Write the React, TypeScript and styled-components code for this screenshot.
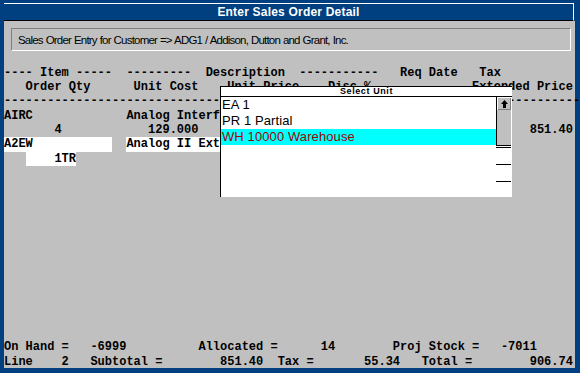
import styled, { createGlobalStyle } from "styled-components";

const GlobalStyle = createGlobalStyle`
	html, body {
		margin: 0;
		padding: 0;
		background: #004080;
	}
`;

const Frame = styled.div`
	width: 580px;
	height: 373px;
	box-sizing: border-box;
	padding: 3px 5px 5px 4px;
	background: #004080;
	display: flex;
	flex-direction: column;
	overflow: hidden;
`;

const TitleBar = styled.div`
	height: 18px;
	box-sizing: border-box;
	margin-right: 1px;
	border-top: 1px solid #ffffff;
	border-right: 1px solid #ffffff;
	border-bottom: 1px solid #000000;
	display: flex;
	align-items: center;
	justify-content: center;
	color: #ffffff;
	font: bold 12px "Liberation Sans", Arial, sans-serif;
	letter-spacing: 0.2px;
`;

const Body = styled.div`
	position: relative;
	flex: 1;
	background: #c0c0c0;
	display: flex;
	flex-direction: column;
`;

const Banner = styled.div`
	margin: 7px 4px 0 7px;
	height: 23px;
	box-sizing: border-box;
	border-top: 1px solid #808080;
	border-left: 1px solid #808080;
	border-right: 1px solid #ffffff;
	border-bottom: 1px solid #ffffff;
	padding-left: 6px;
	display: flex;
	align-items: center;
	font: 11.5px "Liberation Sans", Arial, sans-serif;
	letter-spacing: -0.8px;
	word-spacing: 0.5px;
	color: #000000;
	white-space: nowrap;
`;

const Grid = styled.div`
	margin-top: 14.5px;
	font: bold 12px "Liberation Mono", "Courier New", monospace;
	color: #000000;
`;

const Row = styled.div<{ $height?: number }>`
	height: ${(p) => p.$height ?? 14.4}px;
	line-height: ${(p) => p.$height ?? 14.4}px;
	white-space: pre;
`;

const Field = styled.span<{ $cols: number; $right?: boolean }>`
	display: inline-block;
	vertical-align: top;
	width: ${(p) => p.$cols}ch;
	background: #ffffff;
	text-align: ${(p) => (p.$right ? "right" : "left")};
	overflow: hidden;
`;

const Footer = styled(Grid)`
	margin-top: auto;
	margin-bottom: -2px;
`;

const Popup = styled.div`
	position: absolute;
	left: 216px;
	top: 65px;
	width: 292px;
	height: 111px;
	box-sizing: border-box;
	background: #ffffff;
	border-top: 1px solid #000000;
	border-left: 1px solid #000000;
	display: flex;
	flex-direction: column;
`;

const PopupTitle = styled.div`
	height: 10px;
	box-sizing: border-box;
	border-bottom: 1px solid #000000;
	text-align: center;
	font: bold 9px "Liberation Sans", Arial, sans-serif;
	line-height: 9px;
	letter-spacing: 0.6px;
	color: #000000;
`;

const PopupBody = styled.div`
	flex: 1;
	display: flex;
	padding-right: 1px;
`;

const List = styled.div`
	flex: 1;
`;

const Item = styled.div<{ $selected?: boolean }>`
	height: 16px;
	line-height: 16px;
	padding-left: 1px;
	font: 13px "Liberation Sans", Arial, sans-serif;
	letter-spacing: 0.1px;
	background: ${(p) => (p.$selected ? "#00ffff" : "transparent")};
	color: ${(p) => (p.$selected ? "#a00000" : "#000000")};
	white-space: pre;
`;

const ScrollCol = styled.div`
	width: 15px;
	display: flex;
	flex-direction: column;
`;

const ScrollButton = styled.div`
	height: 13px;
	box-sizing: border-box;
	border-left: 1px solid #000000;
	background: #c0c0c0;
	box-shadow: inset 1px 1px #ffffff, inset -1px -1px #808080;
	display: flex;
	align-items: center;
	justify-content: center;
`;

const ScrollTrack = styled.div`
	height: 36px;
	box-sizing: border-box;
	border-left: 1px solid #000000;
	border-bottom: 1px solid #000000;
	background: #c0c0c0;
`;

const Tick = styled.div<{ $gap: number }>`
	margin-top: ${(p) => p.$gap}px;
	height: 1px;
	background: #000000;
`;

const cols = (parts: [number, string][]) => {
	let s = "";
	for (const [c, t] of parts) s = s.padEnd(c, " ") + t;
	return s;
};

const UpArrow = () => (
	<svg width="7" height="8" viewBox="0 0 7 8">
		<path d="M3.5 0 L7 4 L5 4 L5 8 L2 8 L2 4 L0 4 Z" fill="#000" />
	</svg>
);

const units = ["EA 1", "PR 1 Partial", "WH 10000 Warehouse"];

const App = () => {
	return (
		<>
			<GlobalStyle />
			<Frame>
				<TitleBar>Enter Sales Order Detail</TitleBar>
				<Body>
					<Banner>
						Sales Order Entry for Customer =&gt; ADG1 / Addison, Dutton and Grant, Inc.
					</Banner>
					<Grid>
						<Row>
							{cols([
								[0, "---- Item -----"],
								[17, "---------"],
								[28, "Description"],
								[41, "-----------"],
								[55, "Req Date"],
								[66, "Tax"],
							])}
						</Row>
						<Row>
							{cols([
								[3, "Order Qty"],
								[18, "Unit Cost"],
								[31, "Unit Price"],
								[45, "Disc %"],
								[65, "Extended Price"],
							])}
						</Row>
						<Row>{"-".repeat(80)}</Row>
						<Row>
							{cols([
								[0, "AIRC"],
								[17, "Analog Interface Module"],
							])}
						</Row>
						<Row>
							{cols([
								[7, "4"],
								[20, "129.000"],
								[33, "129.000"],
								[48, "0.00"],
								[73, "851.40"],
							])}
						</Row>
						<Row>
							<Field $cols={15}>A2EW</Field>
							{"  "}
							<Field $cols={30}>Analog II Extender Board</Field>
						</Row>
						<Row>
							{"   "}
							<Field $cols={7} $right>
								1TR
							</Field>
						</Row>
					</Grid>
					<Footer>
						<Row $height={15}>
							{cols([
								[0, "On Hand ="],
								[12, "-6999"],
								[27, "Allocated ="],
								[44, "14"],
								[54, "Proj Stock ="],
								[69, "-7011"],
							])}
						</Row>
						<Row $height={15}>
							{cols([
								[0, "Line"],
								[8, "2"],
								[12, "Subtotal ="],
								[30, "851.40"],
								[38, "Tax ="],
								[50, "55.34"],
								[58, "Total ="],
								[73, "906.74"],
							])}
						</Row>
					</Footer>
					<Popup>
						<PopupTitle>Select Unit</PopupTitle>
						<PopupBody>
							<List>
								{units.map((u, i) => (
									<Item key={u} $selected={i === 2}>
										{u}
									</Item>
								))}
							</List>
							<ScrollCol>
								<ScrollButton>
									<UpArrow />
								</ScrollButton>
								<ScrollTrack />
								<Tick $gap={1} />
								<Tick $gap={16} />
								<Tick $gap={16} />
							</ScrollCol>
						</PopupBody>
					</Popup>
				</Body>
			</Frame>
		</>
	);
};

export default App;
